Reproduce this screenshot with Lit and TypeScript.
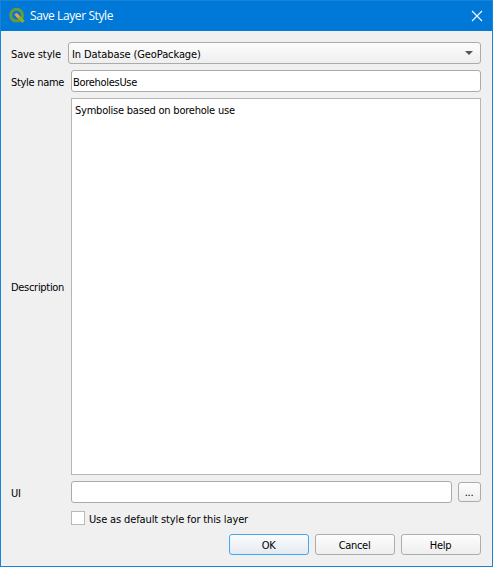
import { LitElement, html, css } from "lit";
import { customElement, property } from "lit/decorators.js";

@customElement("dialog-button")
class DialogButton extends LitElement {
  @property() label = "";
  @property({ type: Boolean, reflect: true }) primary = false;
  static styles = css`
    :host { display: block; width: 80px; height: 21px; }
    .button {
      box-sizing: border-box; width: 100%; height: 100%; padding: 2px 1px 0 0;
      display: flex; align-items: center; justify-content: center;
      border: 1px solid #acacac; border-radius: 3px;
      background: linear-gradient(#fdfdfd, #eeeeee);
      font: inherit; letter-spacing: inherit; color: #000;
    }
    :host([primary]) .button { border-color: #42a8f5; background: linear-gradient(#fbfcfd, #e4eaf0); }
  `;
  render() {
    return html`<button class="button">${this.label}</button>`;
  }
}

@customElement("app-root")
class AppRoot extends LitElement {
  static styles = css`
    :host {
      display: flex; flex-direction: column; box-sizing: border-box;
      width: 493px; height: 567px; border: 1px solid #1883d7;
      background: #f0f0f0; color: #000; overflow: hidden;
      font: 11px/14px "DejaVu Sans Condensed", "DejaVu Sans", sans-serif;
      font-stretch: condensed; letter-spacing: -0.3px; white-space: nowrap;
    }
    .title { flex: none; box-sizing: border-box; display: flex; align-items: center; height: 30px; background: #0078d7; color: #fff; padding: 0 9px 1px 8px; }
    .title span { flex: 1; margin-left: 4px; padding-top: 1px; font: 12px/16px "Open Sans", sans-serif; letter-spacing: -0.4px; }
    .logo, .close { flex: none; display: block; }
    .body { flex: 1; display: flex; flex-direction: column; gap: 6px; padding: 11px 11px 11px 10px; }
    .row { display: flex; align-items: center; }
    .label { flex: none; width: 60px; padding-top: 4px; }
    .area-row .label { padding-top: 2px; }
    .combo-label { width: 57px; letter-spacing: -0.12px; }
    .box { box-sizing: border-box; flex: 1; height: 22px; border: 1px solid #ababab; border-radius: 3px; background: #fff; padding: 4px 2px 0 1px; display: flex; align-items: center; }
    .combo { justify-content: space-between; padding: 0 7px 0 3px; background: linear-gradient(#fdfdfd, #eeeeee); letter-spacing: -0.1px; }
    .combo span { padding-top: 4px; }
    .area-row { flex: 1; }
    .area { box-sizing: border-box; flex: 1; align-self: stretch; border: 1px solid #b5b5b5; background: #fff; padding: 5px 4px 4px 3px; letter-spacing: -0.22px; }
    .browse { width: 23px; height: 20px; margin-left: 6px; }
    .check { margin: 2px 0 3px 60px; gap: 4px; height: 14px; letter-spacing: -0.13px; }
    .check-label { padding-top: 4px; }
    .tick { box-sizing: border-box; width: 14px; height: 14px; border: 1px solid #b9b9b9; background: #fff; }
    .actions { justify-content: flex-end; gap: 6px; }
  `;
  render() {
    return html`
      <div class="title">
        <svg class="logo" width="17" height="17" viewBox="0 0 17 17">
          <circle cx="7.6" cy="8.2" r="5.9" fill="none" stroke="#689b38" stroke-width="3" />
          <path d="M8 8.4 L14.5 14.9" stroke="#93b023" stroke-width="3.2" />
          <path d="M6.4 6.8 L9.8 10.2" stroke="#f09a52" stroke-width="3" />
        </svg>
        <span>Save Layer Style</span>
        <svg class="close" width="12" height="12" viewBox="0 0 12 12">
          <path d="M1 1 L11 11 M11 1 L1 11" stroke="#fff" stroke-width="1.1" />
        </svg>
      </div>
      <div class="body">
        <div class="row">
          <span class="label combo-label">Save style</span>
          <div class="box combo">
            <span>In Database (GeoPackage)</span>
            <svg width="8" height="4" viewBox="0 0 8 4"><path d="M0 0H8L4 4Z" fill="#555" /></svg>
          </div>
        </div>
        <div class="row">
          <span class="label">Style name</span>
          <div class="box">BoreholesUse</div>
        </div>
        <div class="row area-row">
          <span class="label">Description</span>
          <div class="area">Symbolise based on borehole use</div>
        </div>
        <div class="row">
          <span class="label">UI</span>
          <div class="box"></div>
          <dialog-button class="browse" label="..."></dialog-button>
        </div>
        <div class="row check">
          <span class="tick"></span>
          <span class="check-label">Use as default style for this layer</span>
        </div>
        <div class="row actions">
          <dialog-button primary label="OK"></dialog-button>
          <dialog-button label="Cancel"></dialog-button>
          <dialog-button label="Help"></dialog-button>
        </div>
      </div>
    `;
  }
}
